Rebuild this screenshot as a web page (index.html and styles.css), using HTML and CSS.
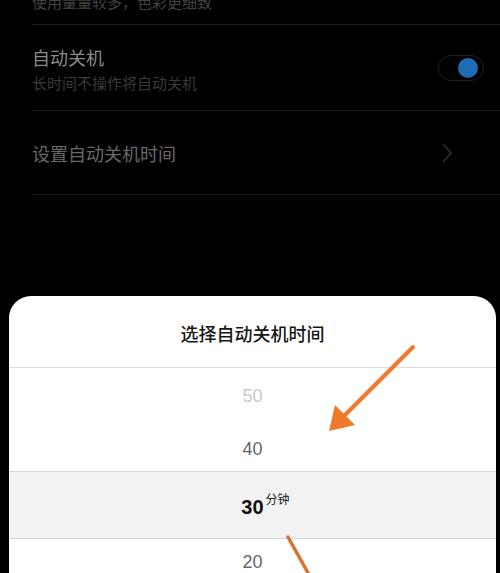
FILE: index.html
```html
<!DOCTYPE html>
<html lang="zh-CN">
<head>
    <meta charset="UTF-8">
    <meta name="viewport" content="width=device-width, initial-scale=1.0">
    <title>自动关机</title>
    <link rel="stylesheet" href="styles.css">
</head>
<body>
    <div class="lista">
        <div class="item item-topo">
            <span class="sub sub-topo">使用量量较多，色彩更细致</span>
        </div>
        <div class="item item-duplo">
            <div class="textos">
                <span class="titulo">自动关机</span>
                <span class="sub">长时间不操作将自动关机</span>
            </div>
            <span class="chave"><span class="bolinha"></span></span>
        </div>
        <div class="item item-simples">
            <span class="titulo titulo-link">设置自动关机时间</span>
            <svg class="seta" width="12" height="22" viewBox="0 0 12 22">
                <polyline points="2,2 10,11 2,20" fill="none" stroke="#2e2e2e" stroke-width="1.6"/>
            </svg>
        </div>
    </div>

    <div class="folha">
        <h2 class="folha-titulo">选择自动关机时间</h2>
        <div class="seletor">
            <div class="opcao opcao-longe">50</div>
            <div class="opcao opcao-perto">40</div>
            <div class="opcao opcao-atual"><span>30<sup>分钟</sup></span></div>
            <div class="opcao opcao-baixo">20</div>
        </div>
    </div>

    <!-- setas de destaque por cima da tela -->
    <svg class="marcas" width="500" height="573" viewBox="0 0 500 573">
        <line x1="413" y1="347" x2="343" y2="417" stroke="#ef7a2c" stroke-width="4" stroke-linecap="round"/>
        <polygon points="329,431 335,405 355,425" fill="#ef7a2c"/>
        <line x1="288" y1="537" x2="312" y2="580" stroke="#d9742f" stroke-width="3.5" stroke-linecap="round"/>
    </svg>
</body>
</html>
```

FILE: styles.css
```css
body {
    margin: 0;
    background-color: #000;
    font-family: "Noto Sans CJK SC", "Noto Sans", sans-serif;
    position: relative;
    height: 573px;
    overflow: hidden;
}

.lista {
    padding-left: 32px;
}

.item {
    display: flex;
    align-items: center;
    border-bottom: 1px solid #1b1b1b;
    box-sizing: border-box;
}

.item-topo {
    height: 25px;
    align-items: flex-start;
}

.item-duplo {
    height: 86px;
    padding-right: 16px;
    justify-content: space-between;
}

.item-simples {
    height: 84px;
    padding-right: 47px;
    justify-content: space-between;
}

.textos {
    display: flex;
    flex-direction: column;
    padding-top: 4px;
}

.titulo {
    font-size: 18px;
    line-height: 26px;
    color: #8a8a8a;
}

.titulo-link {
    color: #686868;
}

.sub {
    font-size: 15px;
    line-height: 26px;
    color: #3a3a3a;
}

.sub-topo {
    color: #444;
    margin-top: -11px;
}

.chave {
    width: 46px;
    height: 26px;
    border: 1px solid #1e1e1e;
    border-radius: 14px;
    display: flex;
    align-items: center;
    justify-content: flex-end;
    padding-right: 5px;
    box-sizing: border-box;
}

.bolinha {
    width: 20px;
    height: 20px;
    border-radius: 50%;
    background-color: #1d6db4;
}

.folha {
    margin: 101px 4px 0 9px;
    background-color: #fff;
    border-radius: 22px 22px 0 0;
}

.folha-titulo {
    margin: 0;
    height: 72px;
    line-height: 74px;
    text-align: center;
    font-size: 18px;
    font-weight: 500;
    color: #161616;
    border-bottom: 1px solid #dcdcdc;
    box-sizing: border-box;
}

.seletor {
    display: flex;
    flex-direction: column;
}

.opcao {
    display: flex;
    align-items: center;
    justify-content: center;
    font-family: "Liberation Sans", Arial, sans-serif;
    font-size: 18px;
    color: #666;
}

.opcao-longe {
    height: 56px;
    color: #c8c8c8;
}

.opcao-perto {
    height: 47px;
    padding-top: 4px;
    box-sizing: border-box;
}

.opcao-atual {
    height: 68px;
    background-color: #f2f2f2;
    border-top: 1px solid #d8d8d8;
    border-bottom: 1px solid #d8d8d8;
    box-sizing: border-box;
    font-size: 20px;
    font-weight: bold;
    color: #111;
    padding-left: 26px;
}

.opcao-atual sup {
    font-family: "Noto Sans CJK SC", sans-serif;
    font-size: 12px;
    font-weight: normal;
    color: #222;
    margin-left: 2px;
    position: relative;
    top: -2px;
}

.opcao-baixo {
    height: 46px;
}

.marcas {
    position: absolute;
    left: 0;
    top: 0;
    pointer-events: none;
}
```
